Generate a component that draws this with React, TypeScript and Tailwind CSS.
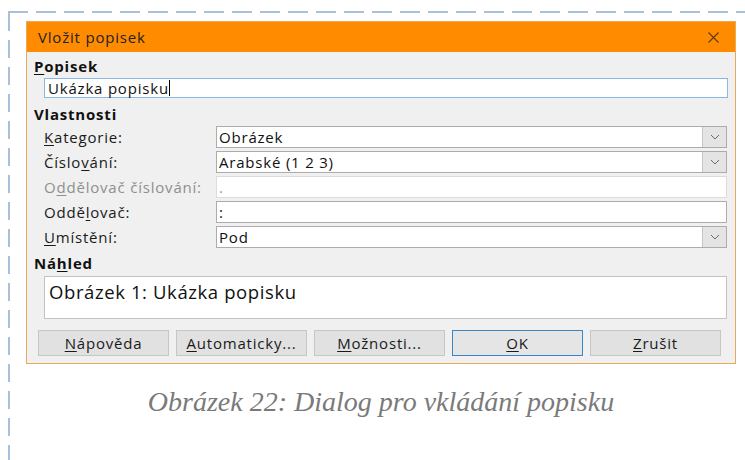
import React from "react";

const ui = { fontFamily: '"Open Sans", "Noto Sans", sans-serif' };

function U({ children }: { children: React.ReactNode }) {
  return <span className="underline underline-offset-2 decoration-1">{children}</span>;
}

function Chevron() {
  return (
    <svg width="10" height="6" viewBox="0 0 10 6" fill="none">
      <path d="M1 1l4 4 4-4" stroke="#6b6b6b" strokeWidth="1" />
    </svg>
  );
}

function Combo({ value }: { value: string }) {
  return (
    <div className="flex h-[22px] flex-1 border border-[#acacac] bg-white">
      <div className="flex flex-1 items-center pl-[2px] text-[15px] leading-[20px] tracking-[0.8px] text-[#111]">{value}</div>
      <div className="flex w-[24px] items-center justify-center border-l border-[#c4c4c4] bg-[#e4e4e4]">
        <Chevron />
      </div>
    </div>
  );
}

function Field({ value, disabled }: { value: string; disabled?: boolean }) {
  return (
    <div
      className={
        disabled
          ? "flex h-[22px] flex-1 items-center border border-[#dcdcdc] bg-white pl-[2px] text-[15px] leading-[20px] text-[#9a9a9a]"
          : "flex h-[22px] flex-1 items-center border border-[#acacac] bg-white pl-[2px] text-[15px] leading-[20px] text-[#111]"
      }
    >
      {value}
    </div>
  );
}

function Row({
  label,
  children,
  disabled,
}: {
  label: React.ReactNode;
  children: React.ReactNode;
  disabled?: boolean;
}) {
  return (
    <div className="mt-[3px] flex h-[22px] items-center pl-[10px] pr-[8px]">
      <div
        className={
          disabled
            ? "w-[172px] text-[15px] leading-[20px] tracking-[0.8px] text-[#8f8f8f]"
            : "w-[172px] text-[15px] leading-[20px] tracking-[0.8px] text-[#1a1a1a]"
        }
      >
        {label}
      </div>
      {children}
    </div>
  );
}

function Btn({ children, primary }: { children: React.ReactNode; primary?: boolean }) {
  return (
    <div
      className={
        primary
          ? "flex h-[26px] w-[131px] items-center justify-center border border-[#3d86c6] bg-[#e5e5e5] text-[15px] leading-[20px] tracking-[0.8px] text-[#1a1a1a]"
          : "flex h-[26px] w-[131px] items-center justify-center border border-[#c6c6c6] bg-[#e1e1e1] text-[15px] leading-[20px] tracking-[0.8px] text-[#1a1a1a]"
      }
    >
      {children}
    </div>
  );
}

export default function App() {
  return (
    <div className="h-[460px] w-[745px] overflow-hidden bg-white">
      <div className="pl-[8px] pt-[11px]">
        {/* frame: dashed top edge */}
        <svg width="737" height="2" className="block">
          <line x1="0" y1="1" x2="737" y2="1" stroke="#a9c0da" strokeWidth="2" strokeDasharray="20 8" />
        </svg>
        <div className="flex">
          {/* frame: dashed left edge */}
          <svg width="2" height="447" className="block shrink-0">
            <line x1="1" y1="0" x2="1" y2="447" stroke="#a9c0da" strokeWidth="2" strokeDasharray="18 9" />
          </svg>
          <div className="pl-[16px] pt-[8px]">
            <div className="flex h-[343px] w-[710px] flex-col border border-[#eaa85a] bg-[#f0f0f0]" style={ui}>
              <div className="flex h-[30px] shrink-0 items-center justify-between bg-[#ff8c00] pl-[11px] pr-[16px]">
                <span className="text-[15px] tracking-[0.8px] text-[#222]">Vložit popisek</span>
                <svg width="11" height="11" viewBox="0 0 11 11">
                  <path d="M0.5 0.5l10 10M10.5 0.5l-10 10" stroke="#5a3a10" strokeWidth="1.1" />
                </svg>
              </div>

              <div className="flex flex-col pl-[7px]">
                <div className="mt-[5px] h-[19px] text-[15px] font-bold leading-[19px] tracking-[0.8px] text-[#111]">
                  <U>P</U>opisek
                </div>
                <div className="ml-[10px] mr-[7px] mt-[2px] flex h-[20px] items-center border border-[#8ab8e2] bg-white pl-[3px] text-[15px] leading-[18px] tracking-[0.8px] text-[#111]">
                  Ukázka popisku
                  <span className="inline-block h-[16px] w-[1px] bg-black" />
                </div>

                <div className="mt-[8px] h-[17px] text-[15px] font-bold leading-[17px] tracking-[0.8px] text-[#111]">
                  Vlastnosti
                </div>
                <div className="-ml-[7px] flex flex-col pl-[7px]">
                  <Row label={<><U>K</U>ategorie:</>}>
                    <Combo value="Obrázek" />
                  </Row>
                  <Row label={<>Číslo<U>v</U>ání:</>}>
                    <Combo value="Arabské (1 2 3)" />
                  </Row>
                  <Row label={<>O<U>d</U>dělovač číslování:</>} disabled>
                    <Field value="." disabled />
                  </Row>
                  <Row label={<>Oddě<U>l</U>ovač:</>}>
                    <Field value=":" />
                  </Row>
                  <Row label={<><U>U</U>místění:</>}>
                    <Combo value="Pod" />
                  </Row>
                </div>

                <div className="mt-[6px] h-[18px] text-[15px] font-bold leading-[18px] tracking-[0.8px] text-[#111]">
                  Ná<U>h</U>led
                </div>
                <div className="ml-[10px] mr-[8px] mt-[4px] h-[43px] border border-[#c2c2c2] bg-white pl-[4px] pt-[4px] text-[18.5px] leading-[22px] tracking-[0.6px] text-[#111]">
                  Obrázek 1: Ukázka popisku
                </div>

                <div className="mt-[11px] flex gap-[7px] pl-[4px]">
                  <Btn>
                    <U>N</U>ápověda
                  </Btn>
                  <Btn>
                    <U>A</U>utomaticky...
                  </Btn>
                  <Btn>
                    <U>M</U>ožnosti...
                  </Btn>
                  <Btn primary>
                    <U>O</U>K
                  </Btn>
                  <Btn>
                    <U>Z</U>rušit
                  </Btn>
                </div>
              </div>
            </div>
            <div
              className="mt-[22px] w-[710px] text-center text-[28px] italic leading-[32px] text-[#7a7a7a]"
              style={{ fontFamily: '"Liberation Serif", serif' }}
            >
              Obrázek 22: Dialog pro vkládání popisku
            </div>
          </div>
        </div>
      </div>
    </div>
  );
}
